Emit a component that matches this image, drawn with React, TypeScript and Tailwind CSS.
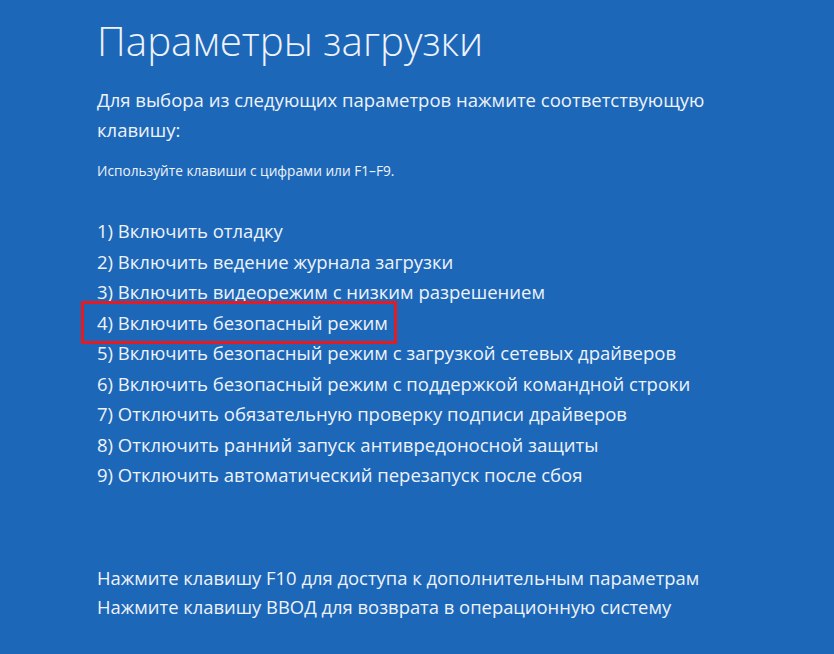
const items = [
  '1) Включить отладку',
  '2) Включить ведение журнала загрузки',
  '3) Включить видеорежим с низким разрешением',
  '4) Включить безопасный режим',
  '5) Включить безопасный режим с загрузкой сетевых драйверов',
  '6) Включить безопасный режим с поддержкой командной строки',
  '7) Отключить обязательную проверку подписи драйверов',
  '8) Отключить ранний запуск антивредоносной защиты',
  '9) Отключить автоматический перезапуск после сбоя',
]

export default function App() {
  return (
    <div
      className="h-[654px] w-[834px] overflow-hidden bg-[#1d67b8] text-[#eef3fa]"
      style={{ fontFamily: '"Open Sans", "Noto Sans", sans-serif' }}
    >
      <div className="flex flex-col pl-[97px] pt-[17px]">
        <h1 className="text-[40.3px] font-light leading-[48px]">Параметры загрузки</h1>

        <p className="mt-[20px] w-[640px] text-[18.5px] leading-[30px]">
          Для выбора из следующих параметров нажмите соответствующую клавишу:
        </p>

        <p className="mt-[16px] text-[13.7px] leading-[20px]">Используйте клавиши с цифрами или F1–F9.</p>

        <ul className="mt-[35px] flex flex-col">
          {items.map((item, i) => (
            <li key={item} className="relative text-[18.5px] leading-[30.5px]">
              {i === 3 && (
                <span className="absolute left-[-16px] top-[-7px] h-[43px] w-[316px] border-[3px] border-[#e51b23]" />
              )}
              {item}
            </li>
          ))}
        </ul>

        <div className="mt-[72px] flex flex-col text-[18.4px] leading-[29.5px]">
          <p>Нажмите клавишу F10 для доступа к дополнительным параметрам</p>
          <p>Нажмите клавишу ВВОД для возврата в операционную систему</p>
        </div>
      </div>
    </div>
  )
}
